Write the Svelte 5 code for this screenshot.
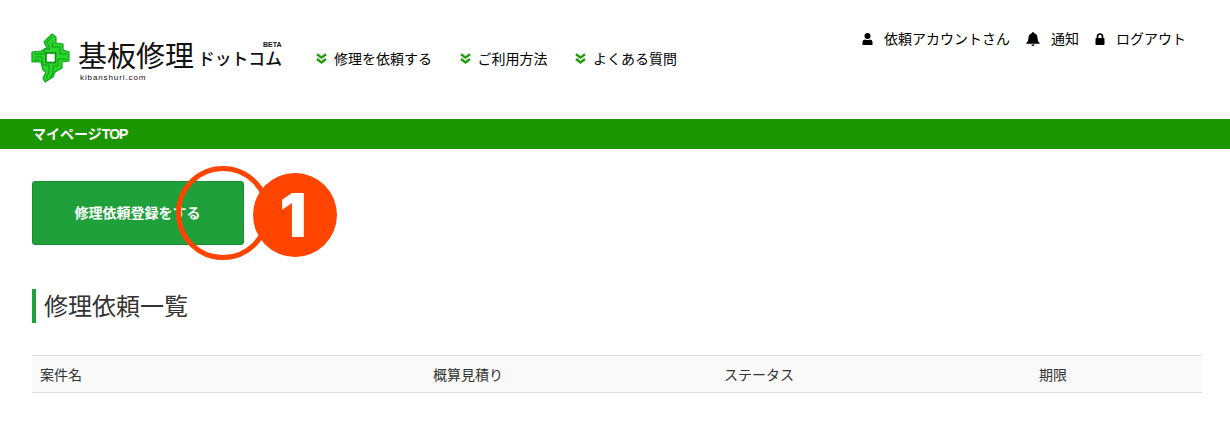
<script>
  const navItems = ['修理を依頼する', 'ご利用方法', 'よくある質問'];
  const columns = [
    { label: '案件名', width: 393 },
    { label: '概算見積り', width: 291 },
    { label: 'ステータス', width: 315 },
    { label: '期限', width: 171 }
  ];
</script>

<div class="page">
  <header class="header">
    <div class="logo">
      <svg class="mark" width="39" height="52" viewBox="31 32 39 52" fill="none">
        <path d="M52 34 L56 37 L56 43 L63 44 L63 50 L69 52 L69 61 L62 62 L62 68 L55 72 L53 77 L45 82 L43 78 L46 72 L43 70 L41 62 L32 62 L32 52 L41 51 L47 48 L44 42 Z" fill="#2bd62b" stroke="#12a01c" stroke-width="1.2" stroke-linejoin="round"/>
        <path d="M52 37 L47 42 L50 49 H44 V54 H34 M53 42 L52 47 H60 V54 H67 M34 57 H42 V62 M34 60 H40 M67 59 H58 V66 H53 V73 L50 78 M43 62 V65 H49 V72 L46 79" stroke="#0f9a1a" stroke-width="1"/>
        <rect x="46" y="53" width="9.5" height="9.5" fill="#fff" stroke="#0d8a16" stroke-width="1.6"/>
      </svg>
      <div class="wordmark">
        <div class="name"><span class="kanji">基板修理</span><span class="kana">ドットコム</span><span class="beta">BETA</span></div>
        <div class="domain">kibanshuri.com</div>
      </div>
    </div>
    <nav class="nav">
      {#each navItems as item}
        <a class="nav-item" href="#top">
          <svg width="11" height="11" viewBox="0 0 11 11" fill="none" stroke="#1f9c08" stroke-width="2.4">
            <path d="M1 1.2 L5.5 4.6 L10 1.2 M1 6 L5.5 9.4 L10 6"/>
          </svg>
          <span>{item}</span>
        </a>
      {/each}
    </nav>
    <div class="account">
      <a class="acct-item" href="#top">
        <svg width="11" height="12" viewBox="0 0 11 12" fill="#000"><circle cx="5.5" cy="3" r="3"/><path d="M0.5 12 V9 Q0.5 6.6 3 6.4 Q5.5 7.8 8 6.4 Q10.5 6.6 10.5 9 V12 Z"/></svg>
        <span>依頼アカウントさん</span>
      </a>
      <a class="acct-item" href="#top">
        <svg width="14" height="14" viewBox="0 0 13 13" fill="#000"><path d="M6.5 0 Q7.4 0 7.5 1.2 Q10.6 2 10.6 5.2 Q10.6 8.6 12.8 10.4 V11 H0.2 V10.4 Q2.4 8.6 2.4 5.2 Q2.4 2 5.5 1.2 Q5.6 0 6.5 0 Z"/><path d="M5 11.6 H8 Q7.6 13 6.5 13 Q5.4 13 5 11.6 Z"/></svg>
        <span>通知</span>
      </a>
      <a class="acct-item" href="#top">
        <svg width="10" height="12" viewBox="0 0 10 12" fill="none"><rect x="0.5" y="5" width="9" height="7" rx="1" fill="#000"/><path d="M2.5 5.5 V3.5 Q2.5 1 5 1 Q7.5 1 7.5 3.5 V5.5" stroke="#000" stroke-width="1.7"/></svg>
        <span>ログアウト</span>
      </a>
    </div>
  </header>

  <div class="bar"><a href="#top">マイページ<span class="top">TOP</span></a></div>

  <main class="main">
    <div class="action">
      <button class="primary">修理依頼登録をする</button>
      <span class="ring"></span>
      <span class="badge">1</span>
    </div>

    <h2 class="title">修理依頼一覧</h2>

    <div class="table-head">
      {#each columns as col}
        <div class="cell" style:width="{col.width}px">{col.label}</div>
      {/each}
    </div>
  </main>
</div>

<style>
  :global(body) {
    margin: 0;
    background: #fff;
  }
  .page {
    width: 1230px;
    height: 440px;
    overflow: hidden;
    font-family: "Liberation Sans", "Noto Sans CJK JP", sans-serif;
    color: #000;
  }
  a {
    color: inherit;
    text-decoration: none;
  }
  .header {
    height: 119px;
    box-sizing: border-box;
    display: flex;
    align-items: flex-start;
    padding: 0 44px 0 31px;
  }
  .logo {
    display: flex;
    align-items: flex-start;
    gap: 8px;
    width: 285px;
    padding-top: 32px;
    flex: none;
  }
  .mark {
    flex: none;
  }
  .wordmark {
    padding-top: 6px;
  }
  .name {
    position: relative;
    display: flex;
    align-items: flex-end;
    height: 32px;
    white-space: nowrap;
    color: #111;
  }
  .kanji {
    font-size: 29px;
    line-height: 32px;
    font-weight: 400;
    font-family: "Noto Sans CJK JP", sans-serif;
  }
  .kana {
    font-size: 16.8px;
    line-height: 24px;
    font-weight: 500;
    margin-left: 4px;
    font-family: "Noto Sans CJK JP", sans-serif;
  }
  .beta {
    position: absolute;
    left: 185px;
    top: 3px;
    font-size: 7px;
    line-height: 7px;
    font-weight: 700;
  }
  .domain {
    font-size: 8px;
    line-height: 9px;
    letter-spacing: 0.9px;
    margin-top: 3px;
    margin-left: 2px;
    color: #111;
  }
  .nav {
    display: flex;
    gap: 27.5px;
    padding-top: 49.5px;
  }
  .nav-item {
    display: flex;
    align-items: center;
    gap: 7px;
    font-size: 14px;
    line-height: 18px;
  }
  .account {
    margin-left: auto;
    display: flex;
    gap: 16px;
    padding-top: 29.5px;
  }
  .acct-item {
    display: flex;
    align-items: center;
    gap: 11px;
    font-size: 14px;
    line-height: 18px;
  }
  .bar {
    height: 30px;
    background: #1b9600;
    padding-left: 32px;
    color: #fff;
    font-size: 14px;
    font-weight: 700;
    line-height: 31px;
  }
  .top {
    letter-spacing: -0.9px;
  }
  .main {
    padding: 32px 28px 0 32px;
  }
  .action {
    position: relative;
    height: 64px;
  }
  .primary {
    display: block;
    width: 212px;
    height: 64px;
    padding: 0 1px 2px 0;
    background: #20a03a;
    border: 1px solid #1a8a30;
    border-radius: 3px;
    color: #fff;
    font: 700 14px "Liberation Sans", "Noto Sans CJK JP", sans-serif;
  }
  .ring {
    position: absolute;
    left: 144px;
    top: -15px;
    width: 94px;
    height: 94px;
    box-sizing: border-box;
    border: 5px solid #ff4500;
    border-radius: 50%;
  }
  .badge {
    position: absolute;
    left: 221px;
    top: -8px;
    width: 84px;
    height: 84px;
    border-radius: 50%;
    background: #ff4500;
    color: #fff;
    font: 900 60px/84px "Inter", "Liberation Sans", sans-serif;
    text-align: center;
    text-indent: -4px;
  }
  .title {
    margin: 44px 0 0;
    height: 34px;
    border-left: 4px solid #20a03a;
    padding-left: 8px;
    font-size: 24px;
    line-height: 35px;
    font-weight: 400;
    color: #333;
  }
  .table-head {
    display: flex;
    margin-top: 32px;
    height: 36px;
    background: #f9f9f9;
    border-top: 1px solid #ddd;
    border-bottom: 1px solid #ddd;
  }
  .cell {
    box-sizing: border-box;
    padding-left: 8px;
    font-size: 14px;
    line-height: 38px;
    color: #333;
  }
</style>
